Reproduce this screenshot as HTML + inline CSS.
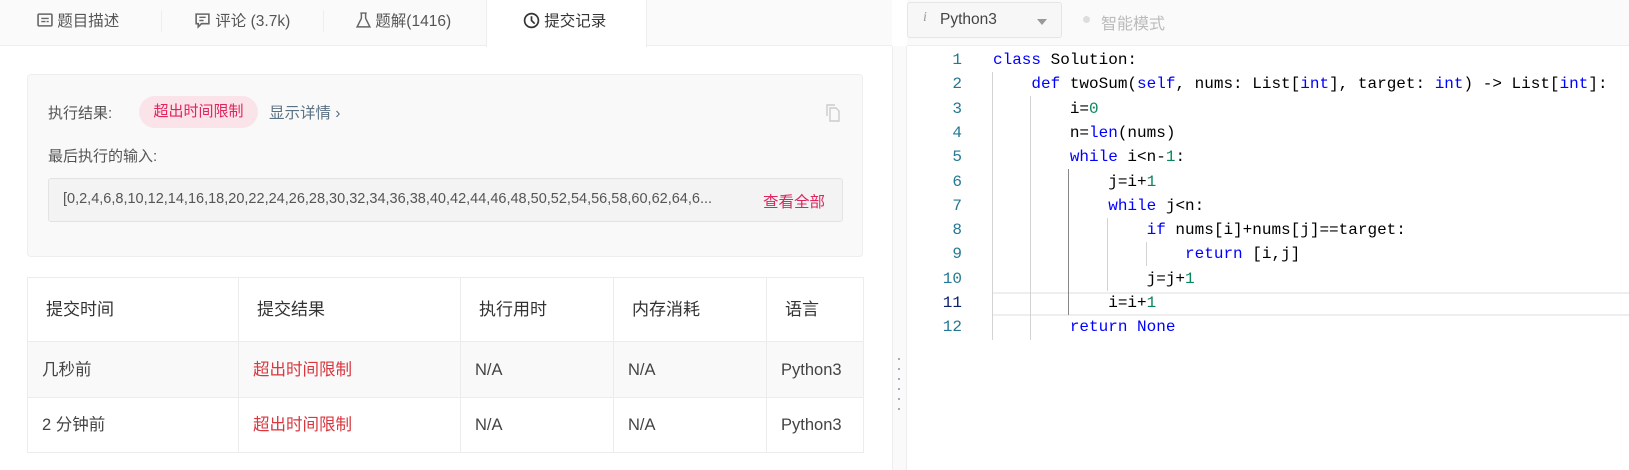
<!DOCTYPE html>
<html><head><meta charset="utf-8"><style>
*{margin:0;padding:0;box-sizing:border-box}
body{width:1629px;height:470px;overflow:hidden;background:#fff;font-family:"Liberation Sans","Noto Sans CJK SC",sans-serif;position:relative;color:#333}
.abs{position:absolute}
.tabbar{left:0;top:0;width:892px;height:46px;background:#fafafa;border-bottom:1px solid #eee}
.tab{position:absolute;top:0;height:46px;line-height:44px;font-size:15.5px;color:#555;white-space:nowrap}
.sep{position:absolute;top:10px;width:1px;height:22px;background:#eee}
.active{left:486px;width:161px;height:47px;background:#fff;border-left:1px solid #eee;border-right:1px solid #eee}
.card{left:27px;top:74px;width:836px;height:183px;background:#f9f9f9;border:1px solid #eee;border-radius:4px}
.lbl{font-size:15px;color:#555}
.badge{left:139px;top:96px;width:119px;height:32px;border-radius:16px;background:#fbe3ea;color:#e0245e;font-size:15px;text-align:center;line-height:32px}
.inp{left:48px;top:178px;width:795px;height:44px;background:#f3f3f3;border:1px solid #e3e3e3;border-radius:3px}
table{position:absolute;left:27px;top:277px;border-collapse:collapse;width:836px;table-layout:fixed}
td{border:1px solid #ececec;font-size:16.5px;color:#444;padding-left:14px;vertical-align:middle;line-height:22px}
td span{display:inline-block;line-height:22px;vertical-align:middle}
tr.h td{height:64px;padding-left:18px;color:#333;font-size:17px}
tr.r1 td{height:56px;background:#f9f9f9}
tr.r2 td{height:55px}
.red{color:#d9363e}
.gut{left:892px;top:46px;width:15px;height:424px;background:#fafafa;border-left:1px solid #eee;border-right:1px solid #eee}
.ehead{left:907px;top:0;width:722px;height:46px;background:#fafafa;border-bottom:1px solid #eee}
.sel{left:907px;top:2px;width:155px;height:36px;border:1px solid #e5e5e5;border-radius:3px;background:#f7f7f7}
.code{left:907px;top:48px;font-family:"Liberation Mono",monospace;font-size:16px}
.ln{position:absolute;left:0;width:55px;text-align:right;color:#237893;height:24.3px;line-height:24.3px}
.cl{position:absolute;left:86px;white-space:pre;color:#000;height:24.3px;line-height:24.3px}
.k{color:#0000ff}.n{color:#098658}
.g{position:absolute;width:1px;background:#d3d3d3}
</style></head><body>
<div class="abs tabbar"></div>
<div class="abs active"></div>
<div class="sep" style="left:161px"></div><div class="sep" style="left:323px"></div>
<div class="tab" style="left:37px"><svg width="16" height="14" viewBox="0 0 15 13" style="vertical-align:-1px"><rect x="1" y="1" width="13" height="11" rx="1" fill="none" stroke="#666" stroke-width="1.5"/><path d="M4 5h7M4 8h4M9 8h2" stroke="#666" stroke-width="1.3"/></svg> 题目描述</div>
<div class="tab" style="left:194px"><svg width="17" height="17" viewBox="0 0 16 16" style="vertical-align:-3px"><path d="M2 2h12v9H7l-3 3v-3H2z" fill="none" stroke="#666" stroke-width="1.5"/><path d="M5 5h6M5 8h4" stroke="#666" stroke-width="1.3"/></svg> 评论 (3.7k)</div>
<div class="tab" style="left:356px"><svg width="15" height="17" viewBox="0 0 14 16" style="vertical-align:-3px"><path d="M5 1v5L1 14h12L9 6V1M4 1h6" fill="none" stroke="#666" stroke-width="1.4"/></svg> 题解(1416)</div>
<div class="tab" style="left:523px;color:#333"><svg width="17" height="17" viewBox="0 0 16 16" style="vertical-align:-3px"><circle cx="8" cy="8" r="6.5" fill="none" stroke="#333" stroke-width="1.6"/><path d="M8 4v4l3 3" fill="none" stroke="#333" stroke-width="1.6"/></svg> 提交记录</div>

<div class="abs card"></div>
<div class="abs lbl" style="left:48px;top:102px">执行结果:</div>
<div class="abs badge">超出时间限制</div>
<div class="abs" style="left:269px;top:101px;font-size:15.5px;color:#5a7184">显示详情 ›</div>
<svg class="abs" style="left:826px;top:104px" width="14" height="18" viewBox="0 0 14 18"><path d="M1 12V1h8" fill="none" stroke="#ccc" stroke-width="1.4"/><path d="M4 4h6l3 3v10H4z" fill="none" stroke="#ccc" stroke-width="1.4"/></svg>
<div class="abs lbl" style="left:48px;top:145px">最后执行的输入:</div>
<div class="abs inp"></div>
<div class="abs" style="left:63px;top:191px;font-size:14.5px;color:#555">[0,2,4,6,8,10,12,14,16,18,20,22,24,26,28,30,32,34,36,38,40,42,44,46,48,50,52,54,56,58,60,62,64,6...</div>
<div class="abs" style="left:763px;top:190px;font-size:15.5px;color:#e0245e">查看全部</div>

<table>
<colgroup><col style="width:211px"><col style="width:222px"><col style="width:153px"><col style="width:153px"><col style="width:97px"></colgroup>
<tr class="h"><td><span>提交时间</span></td><td><span>提交结果</span></td><td><span>执行用时</span></td><td><span>内存消耗</span></td><td><span>语言</span></td></tr>
<tr class="r1"><td><span>几秒前</span></td><td class="red"><span>超出时间限制</span></td><td><span>N/A</span></td><td><span>N/A</span></td><td><span>Python3</span></td></tr>
<tr class="r2"><td><span>2 分钟前</span></td><td class="red"><span>超出时间限制</span></td><td><span>N/A</span></td><td><span>N/A</span></td><td><span>Python3</span></td></tr>
</table>

<div class="abs gut"></div>
<div class="abs" style="left:898px;top:350px;width:2px;height:60px;background:repeating-linear-gradient(#fafafa 0 8px,#aab 8px 10px)"></div>
<div class="abs ehead"></div>
<div class="abs sel"></div>
<div class="abs" style="left:923px;top:10px;font-family:'Liberation Serif',serif;font-style:italic;font-size:14px;color:#999">i</div>
<div class="abs" style="left:940px;top:11px;font-size:15.5px;color:#444">Python3</div>
<div class="abs" style="left:1037px;top:19px;width:0;height:0;border-left:5px solid transparent;border-right:5px solid transparent;border-top:6px solid #999"></div>
<div class="abs" style="left:1083px;top:16px;width:7px;height:7px;border-radius:50%;background:#ddd"></div>
<div class="abs" style="left:1101px;top:10px;font-size:16px;color:#bbb">智能模式</div>

<div class="abs" style="left:993px;top:292px;width:636px;height:24px;border-top:2px solid #eee;border-bottom:2px solid #eee"></div>
<div class="abs code">
<div class="g" style="left:85px;top:24px;height:268px"></div>
<div class="g" style="left:123px;top:48px;height:244px"></div>
<div class="g" style="left:161px;top:121px;height:146px;background:#888"></div>
<div class="g" style="left:200px;top:170px;height:73px"></div>
<div class="g" style="left:239px;top:194px;height:24px"></div>
<div class="ln" style="top:0">1</div><div class="cl" style="top:0"><span class="k">class</span> Solution:</div>
<div class="ln" style="top:24.3px">2</div><div class="cl" style="top:24.3px">    <span class="k">def</span> twoSum(<span class="k">self</span>, nums: List[<span class="k">int</span>], target: <span class="k">int</span>) -&gt; List[<span class="k">int</span>]:</div>
<div class="ln" style="top:48.6px">3</div><div class="cl" style="top:48.6px">        i=<span class="n">0</span></div>
<div class="ln" style="top:72.9px">4</div><div class="cl" style="top:72.9px">        n=<span class="k">len</span>(nums)</div>
<div class="ln" style="top:97.2px">5</div><div class="cl" style="top:97.2px">        <span class="k">while</span> i&lt;n-<span class="n">1</span>:</div>
<div class="ln" style="top:121.5px">6</div><div class="cl" style="top:121.5px">            j=i+<span class="n">1</span></div>
<div class="ln" style="top:145.8px">7</div><div class="cl" style="top:145.8px">            <span class="k">while</span> j&lt;n:</div>
<div class="ln" style="top:170.1px">8</div><div class="cl" style="top:170.1px">                <span class="k">if</span> nums[i]+nums[j]==target:</div>
<div class="ln" style="top:194.4px">9</div><div class="cl" style="top:194.4px">                    <span class="k">return</span> [i,j]</div>
<div class="ln" style="top:218.7px">10</div><div class="cl" style="top:218.7px">                j=j+<span class="n">1</span></div>
<div class="ln" style="top:243px;color:#0b216f">11</div><div class="cl" style="top:243px">            i=i+<span class="n">1</span></div>
<div class="ln" style="top:267.3px">12</div><div class="cl" style="top:267.3px">        <span class="k">return</span> <span class="k">None</span></div>
</div>
</body></html>
